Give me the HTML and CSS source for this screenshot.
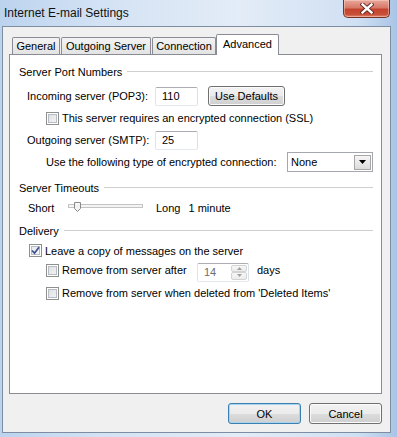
FILE: index.html
```html
<!DOCTYPE html>
<html lang="en">
<head>
  <meta charset="UTF-8">
  <title>Internet E-mail Settings</title>
  <link rel="stylesheet" href="styles.css">
</head>
<body>
  <div class="window">
    <div class="titlebar">
      <span class="title">Internet E-mail Settings</span>
      <div class="close-btn">
        <svg width="14" height="11" viewBox="0 0 14 11">
          <path d="M2.5 1.5 L11.5 9.5 M11.5 1.5 L2.5 9.5" stroke="#5b2018" stroke-width="4.2" stroke-linecap="square" fill="none"/>
          <path d="M2.5 1.5 L11.5 9.5 M11.5 1.5 L2.5 9.5" stroke="#fff" stroke-width="2.4" stroke-linecap="square" fill="none"/>
        </svg>
      </div>
    </div>

    <div class="client">
      <div class="tabs">
        <div class="tab tab-general">General</div>
        <div class="tab tab-outgoing">Outgoing Server</div>
        <div class="tab tab-connection">Connection</div>
        <div class="tab active">Advanced</div>
      </div>

      <div class="panel">
        <div class="group">Server Port Numbers</div>

        <div class="row indent row-incoming">
          <span class="field-label">Incoming server (POP3):</span>
          <div class="textbox">110</div>
          <div class="btn btn-defaults">Use Defaults</div>
        </div>

        <div class="row sub row-gap">
          <span class="check"></span>
          <span class="check-text">This server requires an encrypted connection (SSL)</span>
        </div>

        <div class="row indent row-gap">
          <span class="field-label">Outgoing server (SMTP):</span>
          <div class="textbox">25</div>
        </div>

        <div class="row sub row-gap">
          <span>Use the following type of encrypted connection:</span>
          <div class="select">
            <span>None</span>
            <span class="select-arrow">
              <svg width="7" height="4" viewBox="0 0 7 4"><path d="M0 0 H7 L3.5 4 Z" fill="#000"/></svg>
            </span>
          </div>
        </div>

        <div class="group group-timeouts">Server Timeouts</div>

        <div class="row slider-row">
          <span class="slider-label">Short</span>
          <svg class="slider" width="75" height="12" viewBox="0 0 75 12">
            <rect x="0.5" y="3.5" width="74" height="3" fill="#f4f4f4" stroke="#c4c4c4"/>
            <path d="M6.5 1.5 H12.5 V7.5 L9.5 10.5 L6.5 7.5 Z" fill="#f2f2f2" stroke="#8a8a8a"/>
            <path d="M7.5 2.5 H11.5" stroke="#fff"/>
          </svg>
          <span class="slider-long">Long</span>
          <span class="slider-value">1 minute</span>
        </div>

        <div class="group group-delivery">Delivery</div>

        <div class="row leave-row">
          <span class="check checked">
            <svg width="9" height="9" viewBox="0 0 9 9"><path d="M1 4.5 L3.5 7.2 L8 1.2" stroke="#3d5290" stroke-width="1.8" fill="none"/></svg>
          </span>
          <span class="check-text">Leave a copy of messages on the server</span>
        </div>

        <div class="row sub after-row">
          <span class="check"></span>
          <span class="check-text after-label">Remove from server after</span>
          <div class="spin">
            <span class="spin-value">14</span>
            <span class="spin-btns">
              <span class="spin-btn"><svg width="5" height="3" viewBox="0 0 5 3"><path d="M0 3 H5 L2.5 0 Z" fill="#a0a0a0"/></svg></span>
              <span class="spin-btn"><svg width="5" height="3" viewBox="0 0 5 3"><path d="M0 0 H5 L2.5 3 Z" fill="#a0a0a0"/></svg></span>
            </span>
          </div>
          <span class="days">days</span>
        </div>

        <div class="row sub deleted-row">
          <span class="check"></span>
          <span class="check-text">Remove from server when deleted from 'Deleted Items'</span>
        </div>
      </div>

      <div class="footer">
        <div class="btn btn-footer btn-ok">OK</div>
        <div class="btn btn-footer">Cancel</div>
      </div>
    </div>
  </div>
</body>
</html>
```

FILE: styles.css
```css
* {
  box-sizing: border-box;
}
body {
  margin: 0;
  width: 397px;
  height: 437px;
  overflow: hidden;
  font-family: "Liberation Sans", Arial, sans-serif;
  font-size: 11px;
  color: #000;
  background: linear-gradient(to right, #bcd3ee 0%, #d3e2f4 25%, #e3ecf7 60%, #d0e0f3 90%, #a9c4e6 100%);
}
.window {
  display: flex;
  flex-direction: column;
  height: 437px;
}

/* Title bar */
.titlebar {
  height: 26px;
  display: flex;
  align-items: flex-start;
}
.title {
  font-size: 12px;
  line-height: 14px;
  padding: 6px 0 0 4px;
  color: #111;
}
.close-btn {
  margin-left: auto;
  margin-right: 7px;
  width: 47px;
  height: 18px;
  display: flex;
  justify-content: center;
  align-items: center;
  border: 1px solid #7a3027;
  border-top: none;
  border-radius: 0 0 5px 5px;
  background: linear-gradient(#e9a89b 0%, #d8796a 45%, #c4432f 55%, #c94f37 85%, #de8a6c 100%);
  box-shadow: inset 0 0 0 1px rgba(255, 220, 210, 0.45);
}

/* Dialog client area */
.client {
  margin-left: 2px;
  width: 389px;
  height: 407px;
  border: 1px solid #7d8ea3;
  background: #f0f0f0;
  padding: 7px 8px 8px 6px;
  display: flex;
  flex-direction: column;
}

/* Tabs */
.tabs {
  display: flex;
  align-items: flex-end;
  padding-left: 3px;
}
.tab {
  height: 17px;
  line-height: 16px;
  text-align: center;
  border: 1px solid #898c95;
  border-bottom: none;
  border-radius: 2px 2px 0 0;
  background: linear-gradient(#f3f3f3, #e3e3e3);
  margin-right: 1px;
}
.tab-general {
  width: 48px;
}
.tab-outgoing {
  width: 90px;
}
.tab-connection {
  width: 64px;
  margin-right: 0;
}
.tab.active {
  position: relative;
  z-index: 1;
  width: 63px;
  height: 21px;
  line-height: 19px;
  margin-bottom: -1px;
  background: #fff;
}

/* Tab page */
.panel {
  height: 340px;
  border: 1px solid #898c95;
  background: #fff;
  padding: 7px 8px 0 9px;
  display: flex;
  flex-direction: column;
}
.group {
  display: flex;
  align-items: center;
  height: 20px;
}
.group::after {
  content: "";
  flex: 1;
  border-top: 1px solid #cfcfcf;
  margin-left: 5px;
  margin-top: -1px;
}
.group-timeouts {
  margin-top: 6px;
}
.group-delivery {
  margin-top: 3px;
}
.row {
  display: flex;
  align-items: center;
  height: 20px;
}
.indent {
  padding-left: 8px;
}
.sub {
  padding-left: 27px;
}
.row-incoming {
  margin-top: 4px;
}
.row-gap {
  margin-top: 2px;
}
.field-label {
  width: 128px;
}
.textbox {
  width: 43px;
  height: 19px;
  line-height: 17px;
  padding-left: 6px;
  border: 1px solid;
  border-color: #abadb3 #dbdfe6 #e3e9ef #e2e3ea;
  border-radius: 2px;
  background: #fff;
}

/* Buttons */
.btn {
  display: flex;
  justify-content: center;
  align-items: center;
  border: 1px solid #707070;
  border-radius: 3px;
  background: linear-gradient(#f2f2f2 0%, #ebebeb 50%, #dddddd 51%, #cfcfcf 100%);
  box-shadow: inset 0 0 0 1px #fbfbfb;
}
.btn-defaults {
  width: 77px;
  height: 20px;
  margin-left: 10px;
}
.btn-footer {
  width: 73px;
  height: 21px;
}
.btn-ok {
  border-color: #3c7fb1;
  box-shadow: inset 0 0 0 1px #a9d4f0;
}

/* Checkboxes */
.check {
  width: 13px;
  height: 13px;
  border: 1px solid #8e8f8f;
  background: linear-gradient(135deg, #dadcdf, #f7f7f7);
  box-shadow: inset 0 0 0 1px #fff, inset 0 0 0 2px #b9bdc3;
  display: flex;
  justify-content: center;
  align-items: center;
}
.check.checked {
  background: linear-gradient(135deg, #e4e6ea, #fbfbfb);
}
.check-text {
  margin-left: 3px;
}

/* Combo box */
.select {
  width: 86px;
  height: 20px;
  margin-left: auto;
  display: flex;
  align-items: center;
  padding: 0 1px 0 3px;
  border: 1px solid #a4a8ae;
  background: #fff;
}
.select-arrow {
  margin-left: auto;
  width: 17px;
  height: 15px;
  display: flex;
  justify-content: center;
  align-items: center;
  border: 1px solid #a7a7a7;
  background: linear-gradient(#f6f6f6, #dcdcdc);
}

/* Timeout slider */
.slider-row {
  padding-left: 9px;
}
.slider-label {
  width: 40px;
}
.slider {
  margin-top: -3px;
}
.slider-long {
  margin-left: 13px;
}
.slider-value {
  margin-left: 8px;
}

/* Delivery */
.leave-row {
  height: 19px;
  padding-left: 10px;
}
.after-label {
  width: 135px;
}
.spin {
  width: 52px;
  height: 19px;
  margin-top: 4px;
  display: flex;
  border: 1px solid;
  border-color: #abadb3 #dbdfe6 #e3e9ef #e2e3ea;
  border-radius: 2px;
  background: #fff;
}
.spin-value {
  flex: 1;
  padding-left: 6px;
  line-height: 17px;
  color: #6d6d6d;
}
.spin-btns {
  width: 16px;
  margin: 1px 1px 1px 0;
  display: flex;
  flex-direction: column;
}
.spin-btn {
  flex: 1;
  display: flex;
  justify-content: center;
  align-items: center;
  border: 1px solid #d3d3d3;
  border-radius: 2px;
  background: linear-gradient(#f7f7f7, #ececec);
}
.days {
  margin-left: 8px;
}
.deleted-row {
  margin-top: 3px;
}

/* Footer buttons */
.footer {
  margin-top: 9px;
  display: flex;
  justify-content: flex-end;
  gap: 8px;
}
```
